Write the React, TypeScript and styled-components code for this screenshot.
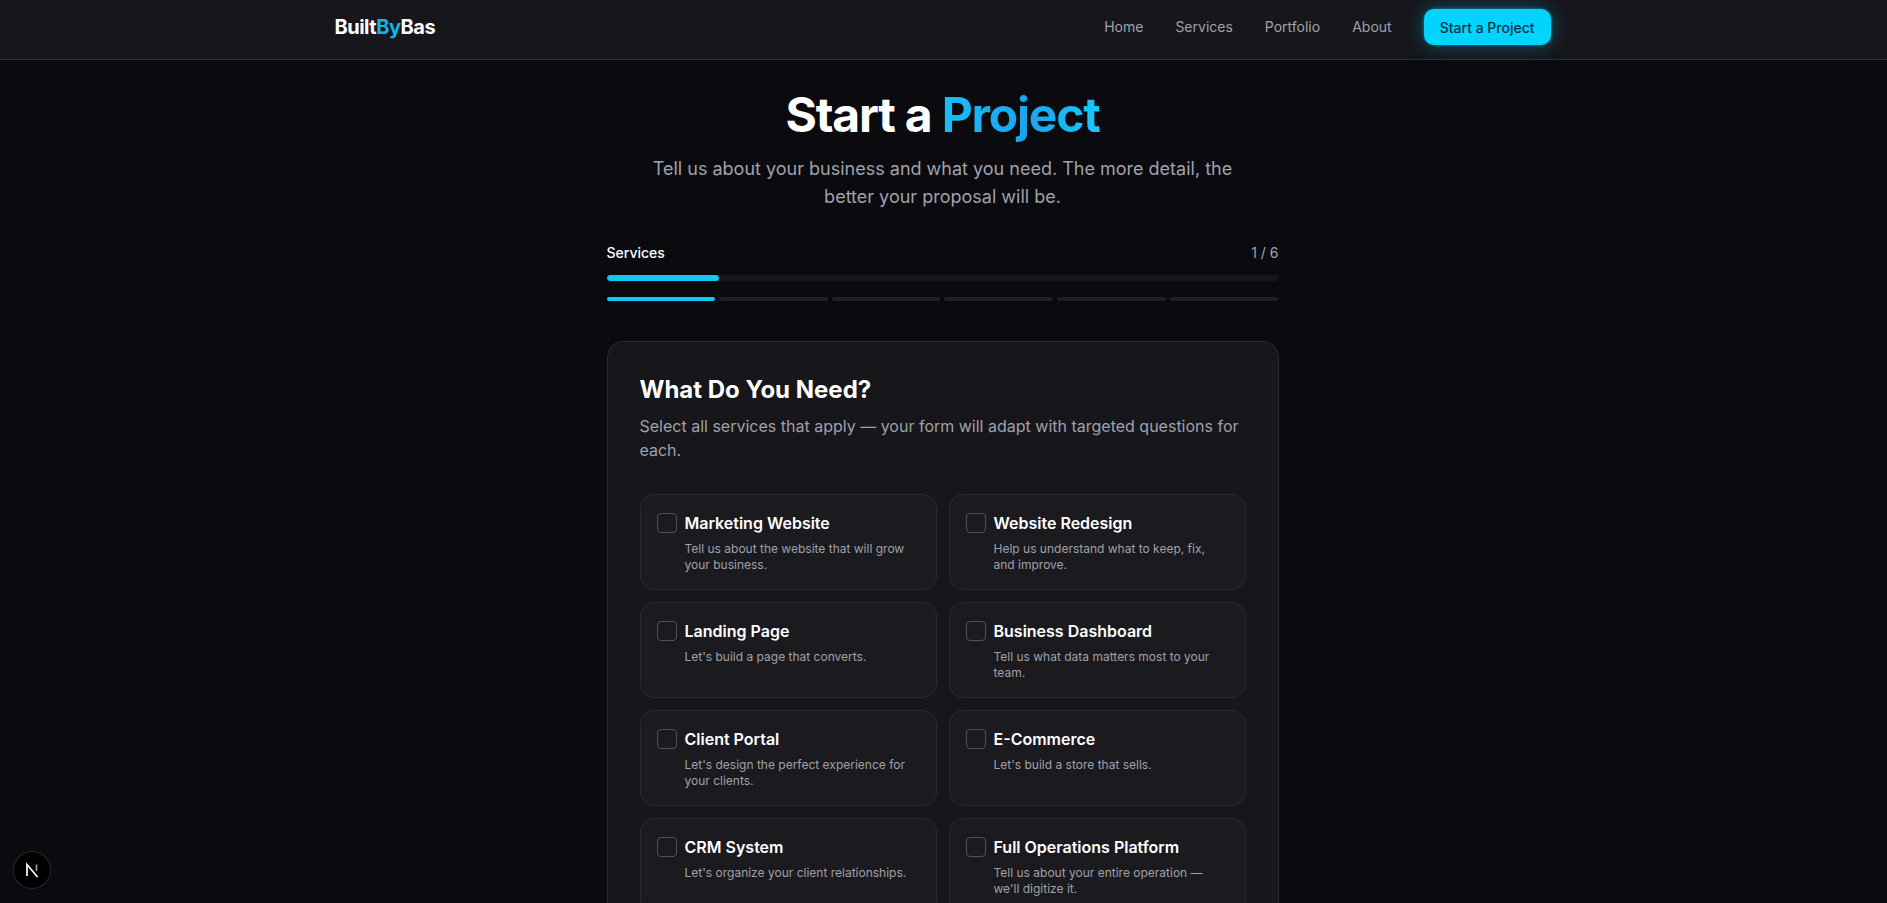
import React from "react"
import styled, { createGlobalStyle } from "styled-components"

const GlobalStyle = createGlobalStyle`
	html, body {
		margin: 0;
		height: 100%;
		overflow: hidden;
		background: #0a0a0f;
	}
	body {
		padding-right: 2px;
		font-family: Inter, "Liberation Sans", sans-serif;
		color: #ffffff;
	}
	* {
		box-sizing: border-box;
	}
`

const Nav = styled.header`
	height: 60px;
	margin-right: -2px;
	padding-right: 2px;
	background: #16161b;
	border-bottom: 1px solid #2c2c31;
`

const NavInner = styled.div`
	max-width: 1280px;
	height: 54px;
	margin: 0 auto;
	padding: 0 32px;
	display: flex;
	align-items: center;
	justify-content: space-between;
`

const Logo = styled.a`
	font-size: 20px;
	line-height: 28px;
	font-weight: 700;
	letter-spacing: -0.5px;
	color: #ffffff;
`

const LogoAccent = styled.span`
	color: #14b4e6;
`

const NavLinks = styled.nav`
	display: flex;
	align-items: center;
	gap: 32px;
`

const NavLink = styled.a`
	font-size: 14px;
	line-height: 20px;
	color: #a1a1aa;
`

const CtaButton = styled.a`
	height: 36px;
	padding: 0 16px;
	display: flex;
	align-items: center;
	font-size: 14px;
	font-weight: 500;
	color: #0b2f45;
	background: #00d4ff;
	border-radius: 10px;
	box-shadow: 0 0 3px rgba(0, 212, 255, 0.6), 0 0 20px rgba(0, 212, 255, 0.35);
`

const Main = styled.main`
	width: 672px;
	margin: 0 auto;
	padding-top: 25px;
`

const Hero = styled.div`
	text-align: center;
	margin-bottom: 32px;
`

const Title = styled.h1`
	margin: 0 0 10px;
	font-size: 48px;
	line-height: 60px;
	font-weight: 700;
	letter-spacing: -1.2px;
`

const TitleAccent = styled.span`
	background: linear-gradient(90deg, #18bdf8, #1aa5ec 55%, #16c8ff);
	-webkit-background-clip: text;
	background-clip: text;
	color: transparent;
`

const Subtitle = styled.p`
	margin: 0 auto;
	max-width: 600px;
	font-size: 18px;
	line-height: 28px;
	color: #a1a1aa;
`

const ProgressHead = styled.div`
	display: flex;
	justify-content: space-between;
	font-size: 14px;
	line-height: 20px;
	margin-bottom: 12px;
`

const StepName = styled.span`
	font-weight: 500;
	color: #ffffff;
`

const StepCount = styled.span`
	color: #a1a1aa;
`

const Track = styled.div`
	height: 6px;
	border-radius: 999px;
	background: #16161b;
	overflow: hidden;
`

const TrackFill = styled.div`
	height: 100%;
	border-radius: 999px;
	background: #14c8f5;
`

const Segments = styled.div`
	display: grid;
	grid-template-columns: repeat(6, 1fr);
	gap: 4px;
	margin-top: 16px;
	margin-bottom: 40px;
`

const Segment = styled.div<{ $active?: boolean }>`
	height: 4px;
	border-radius: 999px;
	background: ${props => (props.$active ? "#14c8f5" : "#1f1f24")};
`

const Card = styled.section`
	padding: 32px;
	background: #16161b;
	border: 1px solid #2a2a2f;
	border-radius: 16px;
`

const CardTitle = styled.h2`
	margin: 0 0 8px;
	font-size: 24px;
	line-height: 32px;
	font-weight: 700;
`

const CardText = styled.p`
	margin: 0 0 32px;
	font-size: 16px;
	line-height: 24px;
	color: #a1a1aa;
`

const ServiceGrid = styled.div`
	display: grid;
	grid-template-columns: 1fr 1fr;
	gap: 12px;
`

const Service = styled.label`
	display: flex;
	align-items: flex-start;
	gap: 8px;
	height: 96px;
	padding: 16px;
	background: #1a1a1f;
	border: 1px solid #2a2a2f;
	border-radius: 14px;
`

const Check = styled.span`
	flex: none;
	width: 20px;
	height: 20px;
	margin-top: 2px;
	border: 1px solid #52525b;
	border-radius: 4px;
`

const ServiceName = styled.div`
	font-size: 16px;
	line-height: 24px;
	font-weight: 600;
	color: #ffffff;
`

const ServiceText = styled.div`
	margin-top: 6px;
	font-size: 12px;
	line-height: 16px;
	color: #a1a1aa;
`

const DevBadge = styled.div`
	position: fixed;
	left: 14px;
	bottom: 15px;
	width: 36px;
	height: 36px;
	display: flex;
	align-items: center;
	justify-content: center;
	border-radius: 50%;
	background: #000000;
	box-shadow: 0 0 0 1px #2a2a2a;
`

const services = [
	{ name: "Marketing Website", text: "Tell us about the website that will grow your business." },
	{ name: "Website Redesign", text: "Help us understand what to keep, fix, and improve." },
	{ name: "Landing Page", text: "Let's build a page that converts." },
	{ name: "Business Dashboard", text: "Tell us what data matters most to your team." },
	{ name: "Client Portal", text: "Let's design the perfect experience for your clients." },
	{ name: "E-Commerce", text: "Let's build a store that sells." },
	{ name: "CRM System", text: "Let's organize your client relationships." },
	{ name: "Full Operations Platform", text: "Tell us about your entire operation — we'll digitize it." },
]

const App: React.FC = () => {
	return (
		<>
			<GlobalStyle />
			<Nav>
				<NavInner>
					<Logo>
						Built<LogoAccent>By</LogoAccent>Bas
					</Logo>
					<NavLinks>
						<NavLink>Home</NavLink>
						<NavLink>Services</NavLink>
						<NavLink>Portfolio</NavLink>
						<NavLink>About</NavLink>
						<CtaButton>Start a Project</CtaButton>
					</NavLinks>
				</NavInner>
			</Nav>
			<Main>
				<Hero>
					<Title>
						Start a <TitleAccent>Project</TitleAccent>
					</Title>
					<Subtitle>Tell us about your business and what you need. The more detail, the better your proposal will be.</Subtitle>
				</Hero>
				<ProgressHead>
					<StepName>Services</StepName>
					<StepCount>1 / 6</StepCount>
				</ProgressHead>
				<Track>
					<TrackFill style={{ width: `${(1 / 6) * 100}%` }} />
				</Track>
				<Segments>
					{[0, 1, 2, 3, 4, 5].map(i => (
						<Segment key={i} $active={i === 0} />
					))}
				</Segments>
				<Card>
					<CardTitle>What Do You Need?</CardTitle>
					<CardText>Select all services that apply — your form will adapt with targeted questions for each.</CardText>
					<ServiceGrid>
						{services.map(s => (
							<Service key={s.name}>
								<Check />
								<div>
									<ServiceName>{s.name}</ServiceName>
									<ServiceText>{s.text}</ServiceText>
								</div>
							</Service>
						))}
					</ServiceGrid>
				</Card>
			</Main>
			<DevBadge>
				<svg width="16" height="16" viewBox="0 0 16 16" fill="none">
					<path d="M3 14V2.5L13.5 15" stroke="#ffffff" strokeWidth="1.7" />
					<path d="M12.5 2.5V9" stroke="#999999" strokeWidth="1.7" />
				</svg>
			</DevBadge>
		</>
	)
}

export default App
